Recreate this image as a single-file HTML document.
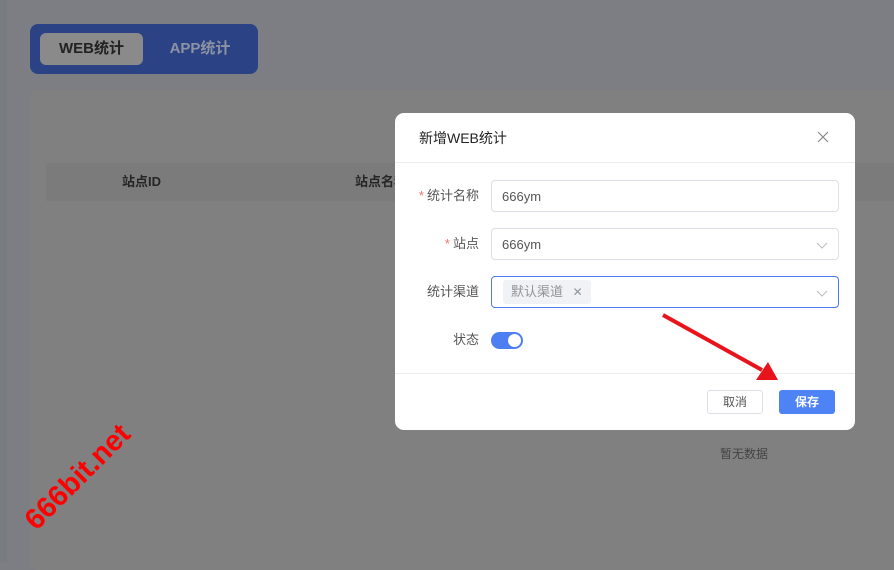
<!DOCTYPE html>
<html><head><meta charset="utf-8"><style>
*{box-sizing:border-box;margin:0;padding:0}
body{width:894px;height:563px;overflow:hidden;background:#7c7e83;font-family:"Liberation Sans","Noto Sans CJK SC",sans-serif;position:relative}
.abs{position:absolute}
.strip{left:0;top:0;width:7px;height:563px;background:#787b80}
.tabs{left:30px;top:24px;width:228px;height:50px;background:#2b4384;border-radius:8px}
.tab1{left:40px;top:33px;width:103px;height:32px;background:#8a8a8a;border-radius:6px;color:#222;font-weight:bold;font-size:15px;text-align:center;line-height:32px}
.tab2{left:150px;top:33px;width:100px;height:32px;color:#8d93a3;font-weight:bold;font-size:15px;text-align:center;line-height:32px}
.card{left:30px;top:90px;width:870px;height:480px;background:#808080;border-radius:8px}
.th{left:46px;top:163px;width:850px;height:38px;background:#7b7b7c}
.tht{top:163px;line-height:38px;font-size:13px;font-weight:bold;color:#252525}
.empty{left:720px;top:445px;font-size:12px;color:#444}
.modal{left:395px;top:113px;width:460px;height:317px;background:#fff;border-radius:9px}
.title{left:24px;top:15px;font-size:14px;color:#222}
.line{left:0;width:460px;height:1px;background:#ececec}
.lab{width:84px;text-align:right;font-size:13px;color:#555;left:0;height:32px;line-height:32px}
.lab b{color:#f56c6c;font-weight:normal;margin-right:3px}
.inp{left:96px;width:348px;height:32px;border:1px solid #dcdfe6;border-radius:4px;font-size:13px;color:#555;line-height:32px;padding-left:10px}
.chev{position:absolute;right:10px;top:10px}
.btn{top:277px;width:56px;height:24px;border-radius:3px;font-size:12px;text-align:center;line-height:22px}
</style></head><body>
<div class="abs strip"></div>
<div class="abs tabs"></div>
<div class="abs tab1">WEB统计</div>
<div class="abs tab2">APP统计</div>
<div class="abs card"></div>
<div class="abs th"></div>
<div class="abs tht" style="left:122px">站点ID</div>
<div class="abs tht" style="left:355px">站点名称</div>
<div class="abs empty">暂无数据</div>
<div class="abs" style="left:30px;top:510px;transform:rotate(-45deg);transform-origin:left center;color:#f00;font-weight:bold;font-size:29px;white-space:nowrap;line-height:30px">666bit.net</div>

<div class="abs modal">
  <div class="abs title">新增WEB统计</div>
  <svg class="abs" style="left:422px;top:18px" width="12" height="12" viewBox="0 0 12 12"><path d="M1 1L11 11M11 1L1 11" stroke="#888" stroke-width="1.2"/></svg>
  <div class="abs line" style="top:49px"></div>
  <div class="abs lab" style="top:67px"><b>*</b>统计名称</div>
  <div class="abs inp" style="top:67px">666ym</div>
  <div class="abs lab" style="top:115px"><b>*</b>站点</div>
  <div class="abs inp" style="top:115px">666ym<svg class="chev" width="12" height="12" viewBox="0 0 12 12"><path d="M1 4L6 9L11 4" fill="none" stroke="#bbb" stroke-width="1"/></svg></div>
  <div class="abs lab" style="top:163px">统计渠道</div>
  <div class="abs inp" style="top:163px;border-color:#4a7cf0;padding-left:11px;line-height:30px"><span style="display:inline-block;background:#f0f2f5;height:24px;line-height:24px;margin-top:3px;vertical-align:top;padding:0 8px;color:#909399;font-size:13px;border-radius:3px">默认渠道 <span style="margin-left:6px;font-size:12px">✕</span></span><svg class="chev" width="12" height="12" viewBox="0 0 12 12"><path d="M1 4L6 9L11 4" fill="none" stroke="#bbb" stroke-width="1"/></svg></div>
  <div class="abs lab" style="top:211px">状态</div>
  <div class="abs" style="left:96px;top:219px;width:32px;height:17px;border-radius:9px;background:#4d7ff2"><div style="position:absolute;right:2px;top:2px;width:13px;height:13px;border-radius:50%;background:#fff"></div></div>
  <div class="abs line" style="top:260px"></div>
  <div class="abs btn" style="left:312px;border:1px solid #dcdfe6;color:#555">取消</div>
  <div class="abs btn" style="left:384px;background:#4d83f5;color:#fff;font-weight:bold;line-height:24px">保存</div>
</div>
<svg class="abs" style="left:0;top:0" width="894" height="563"><path d="M663 315L762 370" stroke="#e8141c" stroke-width="4"/><path d="M778 380L756 380L768 362Z" fill="#e8141c"/></svg>
</body></html>
